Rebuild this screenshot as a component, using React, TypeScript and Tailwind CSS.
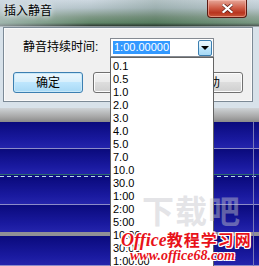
const items = [
  "0.1",
  "0.5",
  "1.0",
  "2.0",
  "3.0",
  "4.0",
  "5.0",
  "7.0",
  "10.0",
  "30.0",
  "1:00",
  "2:00",
  "5:00",
  "10:00",
  "30:00",
  "1:00:00",
];

function Band({ h }: { h: string }) {
  return <div className={`${h} bg-[linear-gradient(#0a0a7c,#1a1aa0_70%,#2424ac)]`} />;
}

export default function App() {
  return (
    <div className="relative h-[266px] w-[259px] overflow-hidden bg-[#d8e2ea] font-['Liberation_Sans','Noto_Sans_CJK_SC',sans-serif] text-black">
      {/* title bar */}
      <div className="relative flex h-[27px] items-start bg-[linear-gradient(#cdd8e0,#b4c3c9_30%,#7f9886_62%,#5f8567_85%,#2e3a33_96%,#dfe7ee)] pl-[4px] pt-[4px]">
        <div className="pointer-events-none absolute inset-0 bg-[linear-gradient(90deg,rgba(210,220,228,0.55),rgba(210,220,228,0)_35%,rgba(20,60,30,0.15)_60%,rgba(210,220,228,0.2))]" />
        <span className="relative text-[12px] leading-[15px] [text-shadow:0_0_4px_#e8eef2,0_0_6px_#e8eef2]">
          插入静音
        </span>
        <div className="absolute left-[207px] top-0 flex h-[18px] w-[40px] items-center justify-center rounded-b-[4px] border border-t-0 border-[#5a1a12] bg-[linear-gradient(#e6a89a,#d0604a_45%,#b8341e_75%,#c85a3c)] shadow-[inset_0_0_0_1px_rgba(255,200,190,0.5)]">
          <svg width="11" height="9" viewBox="0 0 11 9">
            <path d="M1.5 1 L9.5 8 M9.5 1 L1.5 8" stroke="#5a1a12" strokeWidth="3.6" strokeLinecap="square" />
            <path d="M1.5 1 L9.5 8 M9.5 1 L1.5 8" stroke="#ffffff" strokeWidth="2.2" strokeLinecap="square" />
          </svg>
        </div>
      </div>

      {/* dialog body */}
      <div className="h-[81px] pb-[6px] pl-[3px] pr-[6px]">
        <div className="h-[75px] border border-[#7c8a96] bg-[#f0f0f0] pl-[9px] pt-[10px] shadow-[inset_0_0_0_1px_#fafafa]">
          <div className="flex h-[19px] items-center">
            <span className="ml-[10px] w-[87px] text-[12px] leading-[19px]">静音持续时间:</span>
            <div className="flex h-[19px] w-[104px] items-center border border-[#858a92] bg-white pl-[2px] pr-[1px]">
              <span className="bg-[#3399ff] px-px text-[11px] leading-[13px] text-white">1:00.00000</span>
              <div className="ml-auto flex h-[16px] w-[14px] items-center justify-center rounded-[2px] border border-[#3c7fb1] bg-[linear-gradient(#eaf6fd,#d9f0fc_45%,#bee6fd_50%,#a7d9f5)]">
                <div className="h-0 w-0 border-x-[4px] border-t-[4px] border-x-transparent border-t-black" />
              </div>
            </div>
          </div>
          <div className="mt-[15px] flex gap-[10px]">
            <div className="flex h-[21px] w-[70px] items-center justify-center rounded-[3px] border border-[#3c7fb1] bg-[linear-gradient(#eaf6fd,#d9f0fc_45%,#bee6fd_50%,#a7d9f5)] text-[12px] shadow-[inset_0_0_0_1px_#c8e8f8]">
              确定
            </div>
            <div className="flex h-[21px] w-[70px] items-center justify-center rounded-[3px] border border-[#707070] bg-[linear-gradient(#f2f2f2,#ebebeb_45%,#dddddd_50%,#cfcfcf)] text-[12px] shadow-[inset_0_0_0_1px_#fcfcfc]">
              取消
            </div>
            <div className="flex h-[21px] w-[70px] items-center justify-center rounded-[3px] border border-[#707070] bg-[linear-gradient(#f2f2f2,#ebebeb_45%,#dddddd_50%,#cfcfcf)] text-[12px] shadow-[inset_0_0_0_1px_#fcfcfc]">
              帮助
            </div>
          </div>
        </div>
      </div>

      {/* shadow band under dialog */}
      <div className="h-[14px] bg-[linear-gradient(#cfd3d6,#a9a9a9_60%,#8a8a8a)]" />

      {/* waveform area */}
      <div className="relative flex h-[144px] flex-col">
        <Band h="h-[26px]" />
        <div className="h-px bg-[#8c8cc8]" />
        <Band h="h-[25px]" />
        <div className="h-px bg-[#2c6c70]" />
        <div className="h-px bg-[#0e0e80]" />
        <div className="h-px bg-[repeating-linear-gradient(90deg,#b8d8ea_0_4px,transparent_4px_7px)] bg-[#12128a]" />
        <Band h="h-[27px]" />
        <div className="h-px bg-[#8c8cc8]" />
        <Band h="h-[27px]" />
        <div className="h-[4px] bg-[#8f8f96]" />
        <Band h="h-[29px]" />
        <div className="h-px bg-[#8c8cc8]" />
        <div className="flex-1 bg-[#0a0a7c]" />
        <div className="absolute bottom-0 left-[253px] top-0 w-px bg-[#7878b8]" />
      </div>

      {/* open dropdown list */}
      <div className="absolute left-[110px] top-[57px] h-[215px] w-[104px] border border-[#646464] bg-white pl-[2px] pt-[2px]">
        {items.map((t) => (
          <div key={t} className="h-[13px] text-[11px] leading-[13px]">
            {t}
          </div>
        ))}
      </div>

      {/* faint watermark logo */}
      <div className="pointer-events-none absolute left-[142px] top-[196px] text-[32px] font-bold leading-none tracking-[1px] text-[#c4c4cc] opacity-45">
        下载吧
      </div>

      {/* site watermark */}
      <div className="pointer-events-none absolute left-[121px] top-[230px] flex flex-col items-start text-[#e8121a]">
        <div className="flex items-baseline whitespace-nowrap [text-shadow:1px_1px_0_#fff,-1px_-1px_0_#fff,1px_-1px_0_#fff,-1px_1px_0_#fff,0_1px_0_#fff,0_-1px_0_#fff,1px_0_0_#fff,-1px_0_0_#fff]">
          <span className="font-['Liberation_Serif',serif] text-[18px] font-bold italic leading-[18px]">Office</span>
          <span className="font-['Noto_Sans_CJK_SC',sans-serif] text-[16px] font-bold leading-[18px] tracking-[1px]">教程学习网</span>
        </div>
        <div className="ml-[9px] whitespace-nowrap font-['Liberation_Serif',serif] text-[14px] font-bold italic leading-[14px] [text-shadow:1px_1px_0_#fff,-1px_-1px_0_#fff,1px_-1px_0_#fff,-1px_1px_0_#fff]">
          www.office68.com
        </div>
      </div>
    </div>
  );
}
